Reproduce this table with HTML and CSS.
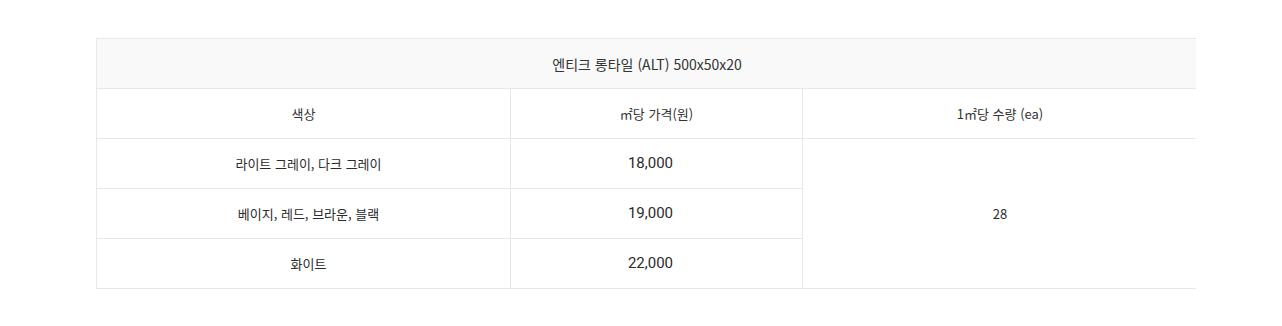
FILE: index.html
```html
<!DOCTYPE html>
<html lang="ko">
<head>
<meta charset="utf-8">
<link rel="stylesheet" href="styles.css">
</head>
<body>
<div class="wrap">
  <table class="spec">
    <colgroup>
      <col class="c1"><col class="c2"><col class="c3">
    </colgroup>
    <thead>
      <tr><th colspan="3" class="title">엔티크 롱타일 (ALT) 500x50x20</th></tr>
      <tr><th>색상</th><th>㎡당 가격(원)</th><th>1㎡당 수량 (ea)</th></tr>
    </thead>
    <tbody>
      <tr><td class="name">라이트 그레이, 다크 그레이</td><td class="num">18,000</td><td rowspan="3" class="qty">28</td></tr>
      <tr><td class="name">베이지, 레드, 브라운, 블랙</td><td class="num">19,000</td></tr>
      <tr><td class="name">화이트</td><td class="num">22,000</td></tr>
    </tbody>
  </table>
</div>
</body>
</html>
```

FILE: styles.css
```css
html, body { margin: 0; padding: 0; background: #fff; }
body { font-family: "Noto Sans CJK KR", "Noto Sans", sans-serif; color: #333; }
.wrap { margin: 38px 0 0 96px; width: 1100px; overflow: hidden; }
.spec { width: 1102px; border-collapse: collapse; table-layout: fixed; }
.c1 { width: 414px; }
.c2 { width: 292px; }
.spec th, .spec td {
  border: 1px solid #e8e8e8;
  height: 49px;
  padding: 0;
  text-align: center;
  vertical-align: middle;
  font-size: 13px;
  font-weight: 400;
  line-height: 1;
}
.spec .title { background: #f9f9f9; font-size: 14px; }
.spec td { font-size: 13px; color: #2b2b2b; }
.spec td.name { padding-left: 10px; }
.spec td.num { font-family: "Roboto", "Noto Sans", sans-serif; font-size: 15px; padding-right: 12px; }
```
